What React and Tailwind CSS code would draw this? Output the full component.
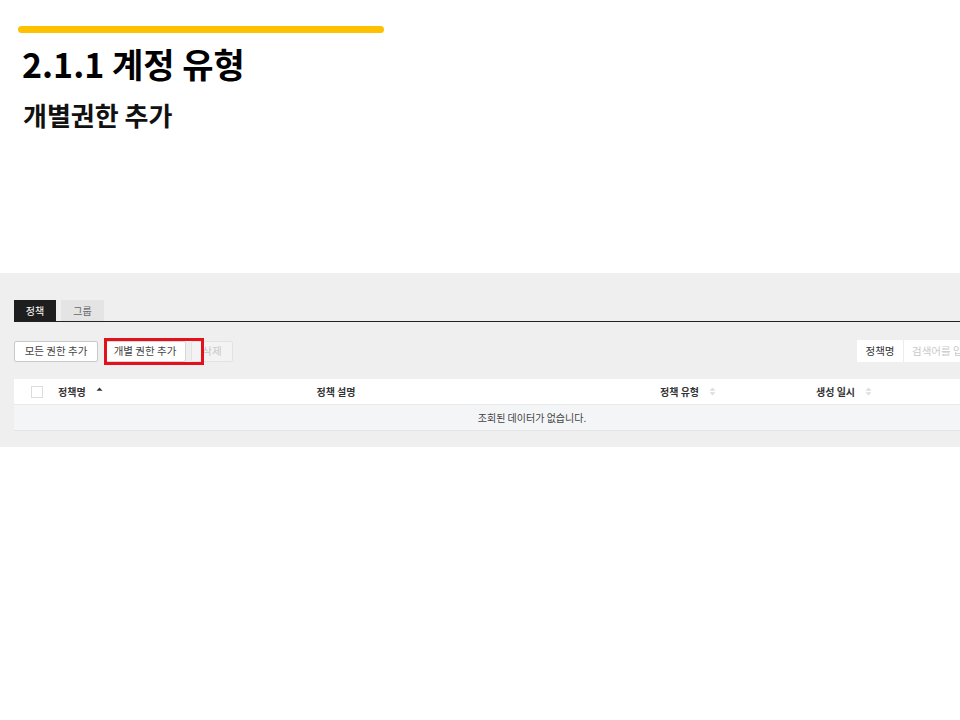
const font = { fontFamily: '"Noto Sans CJK KR", "Noto Sans", sans-serif' };

function SortIcon({ active }) {
  // tiny up/down caret pair used in table headers
  return (
    <svg width="7" height="9" viewBox="0 0 7 9" className="ml-[10px]">
      <path d="M3.5 0.5 L6.5 3.8 L0.5 3.8 Z" fill={active ? '#333' : '#ddd'} />
      {!active && <path d="M3.5 8.5 L6.5 5.2 L0.5 5.2 Z" fill="#ddd" />}
    </svg>
  );
}

function PolicyPanel() {
  return (
    <div className="w-full h-[174px] bg-[#efefef] overflow-hidden pt-[27px] pl-[14px]">
      <div className="w-[1036px]">
        {/* tabs */}
        <div className="flex gap-[5px] border-b-[1.5px] border-[#222] text-[10px]">
          <div className="w-[42px] h-[21px] bg-[#1e1e1e] text-white flex items-center justify-center">정책</div>
          <div className="w-[43px] h-[21px] bg-[#e4e4e4] text-[#666] flex items-center justify-center">그룹</div>
        </div>

        {/* toolbar */}
        <div className="flex justify-between items-center mt-[18px] text-[10.5px]">
          <div className="relative flex gap-[6px]">
            <button className="h-[21px] w-[84px] bg-white border border-[#c9c9c9] text-[#444] rounded-[2px]">모든 권한 추가</button>
            <div className="flex gap-[5px]">
              <button className="h-[21px] w-[82px] bg-white border border-[#d6d6d6] text-[#444] rounded-[2px]">개별 권한 추가</button>
              <button className="h-[21px] w-[42px] bg-[#f3f3f3] border border-[#e2e2e2] text-[#c8c8c8] rounded-[2px]">삭제</button>
            </div>
            <div className="absolute left-[90px] top-[-3px] w-[100px] h-[27px] border-[3px] border-[#e3111b]" />
          </div>
          <div className="flex h-[22px]">
            <div className="w-[47px] bg-white border-r border-[#ececec] flex items-center justify-center text-[#333]">정책명</div>
            <div className="w-[146px] bg-white flex items-center pl-[8px] text-[#c8c8c8]">검색어를 입력하세요</div>
          </div>
        </div>

        {/* table */}
        <div className="mt-[17px] text-[10px] text-[#333]">
          <div className="flex items-center h-[26px] bg-white border-b border-[#e8e8e8] font-bold">
            <div className="w-[44px] pl-[17px]">
              <div className="w-[12px] h-[12px] border border-[#ddd] bg-white" />
            </div>
            <div className="w-[178px] flex items-center">
              정책명
              <SortIcon active />
            </div>
            <div className="w-[200px] text-center">정책 설명</div>
            <div className="w-[224px]" />
            <div className="w-[156px] flex items-center">
              정책 유형
              <SortIcon />
            </div>
            <div className="flex items-center">
              생성 일시
              <SortIcon />
            </div>
          </div>
          <div className="h-[26px] bg-[#f4f5f7] border-b border-[#e4e4e4] flex items-center justify-center text-[#444]">
            조회된 데이터가 없습니다.
          </div>
        </div>
      </div>
    </div>
  );
}

export default function App() {
  return (
    <div className="w-[960px] h-[720px] bg-white relative overflow-hidden" style={font}>
      <div className="pt-[26px] pl-[18px]">
        <div className="w-[366px] h-[7px] rounded-full bg-[#fdc100]" />
        <h1 className="mt-[10px] ml-[4px] text-[34px] font-bold leading-[42px] text-black">2.1.1 계정 유형</h1>
        <h2 className="mt-[14px] ml-[5px] text-[26px] font-bold leading-[32px] text-[#111]">개별권한 추가</h2>
      </div>
      <div className="mt-[142px]">
        <PolicyPanel />
      </div>
    </div>
  );
}
